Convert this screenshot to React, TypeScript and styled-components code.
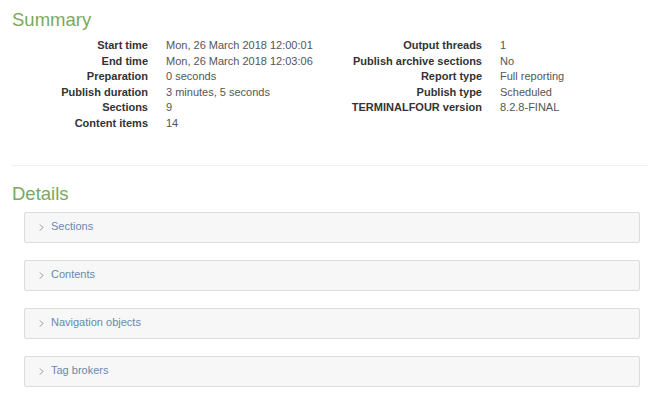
import styled, {createGlobalStyle} from 'styled-components'

const GlobalStyle = createGlobalStyle`
  html, body { margin: 0; padding: 0; background: #fff; }
  body {
    font-family: "Liberation Sans", Arial, sans-serif;
    font-size: 11px;
    color: #333;
  }
`

const Page = styled.div`
  padding: 10px 8px 0 12px;
`

const Heading = styled.h2`
  margin: 0;
  font-size: 18.5px;
  line-height: 20px;
  font-weight: 400;
  color: #79a95c;
`

const SummaryGrid = styled.div`
  display: grid;
  grid-template-columns: 318px 1fr;
  align-items: start;
  margin-top: 8px;
`

const DataList = styled.dl<{ $labelWidth: number }>`
  display: grid;
  grid-template-columns: ${p => p.$labelWidth}px 1fr;
  align-content: start;
  column-gap: 18px;
  margin: 0;
  line-height: 15.6px;
  dt {
    text-align: right;
    font-weight: 700;
    color: #333;
    white-space: nowrap;
  }
  dd {
    margin: 0;
    color: #555;
    white-space: nowrap;
  }
`

const Divider = styled.hr`
  border: 0;
  border-top: 1px solid #f0f0f0;
  margin: 33px -8px 18px 0;
`

const Panels = styled.div`
  display: flex;
  flex-direction: column;
  gap: 17px;
  margin: 8px 0 0 12px;
`

const Panel = styled.div`
  display: flex;
  align-items: center;
  gap: 7px;
  height: 29px;
  padding: 0 14px;
  background: #f7f7f7;
  border: 1px solid #dcdcdc;
  border-radius: 2px;
  color: #6a88ad;
  line-height: 15.6px;
  cursor: pointer;
`

const Chevron = () => (
  <svg width="5" height="7" viewBox="0 0 5 7" fill="none">
    <polyline points="1,0.5 4,3.5 1,6.5" stroke="#8899b0" strokeWidth="1" />
  </svg>
)

const left: [string, string][] = [
  ['Start time', 'Mon, 26 March 2018 12:00:01'],
  ['End time', 'Mon, 26 March 2018 12:03:06'],
  ['Preparation', '0 seconds'],
  ['Publish duration', '3 minutes, 5 seconds'],
  ['Sections', '9'],
  ['Content items', '14'],
]

const right: [string, string][] = [
  ['Output threads', '1'],
  ['Publish archive sections', 'No'],
  ['Report type', 'Full reporting'],
  ['Publish type', 'Scheduled'],
  ['TERMINALFOUR version', '8.2.8-FINAL'],
]

const details = ['Sections', 'Contents', 'Navigation objects', 'Tag brokers']

const renderList = (rows: [string, string][]) =>
  rows.map(([k, v]) => [<dt key={k + 't'}>{k}</dt>, <dd key={k + 'd'}>{v}</dd>])

export default function App() {
  return <>
    <GlobalStyle />
    <Page>
      <Heading>Summary</Heading>
      <SummaryGrid>
        <DataList $labelWidth={136}>{renderList(left)}</DataList>
        <DataList $labelWidth={152}>{renderList(right)}</DataList>
      </SummaryGrid>
      <Divider />
      <Heading>Details</Heading>
      <Panels>
        {details.map(d => (
          <Panel key={d}>
            <Chevron />
            <span>{d}</span>
          </Panel>
        ))}
      </Panels>
    </Page>
  </>
}
